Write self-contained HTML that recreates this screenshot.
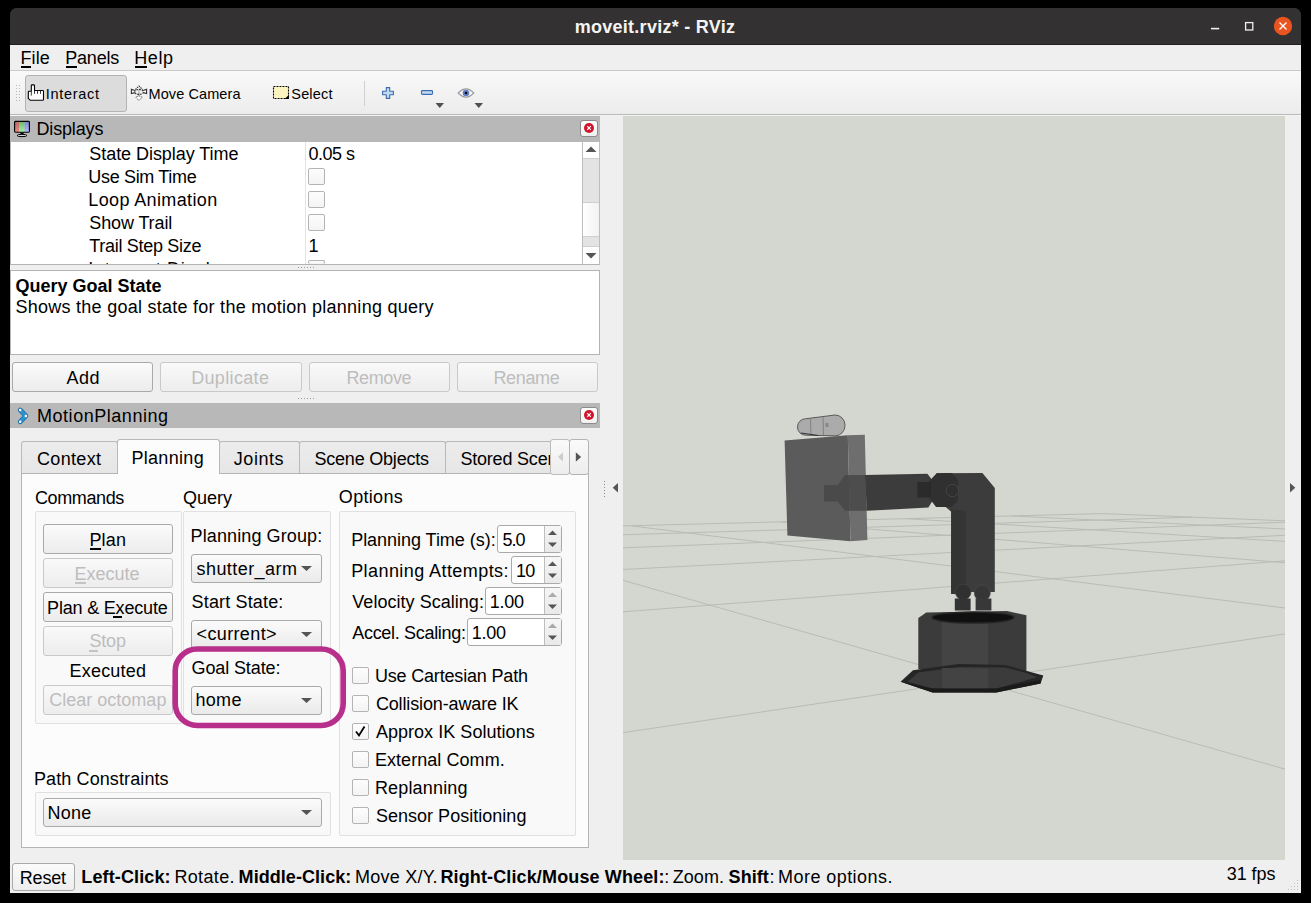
<!DOCTYPE html>
<html><head><meta charset="utf-8">
<style>
html,body{margin:0;padding:0;width:1311px;height:903px;overflow:hidden;background:#000;}
.a{position:absolute;box-sizing:border-box;}
.t{position:absolute;white-space:pre;font-family:"Liberation Sans",sans-serif;line-height:18px;height:18px;}
.btn{position:absolute;box-sizing:border-box;border:1px solid #a9a9a9;border-radius:3px;background:linear-gradient(#fbfbfb,#ececec);}
.btnd{position:absolute;box-sizing:border-box;border:1px solid #c9c9c9;border-radius:3px;background:linear-gradient(#f9f9f9,#ededed);}
.cb{position:absolute;box-sizing:border-box;width:17px;height:17px;border:1px solid #b4b4b4;border-radius:2px;background:linear-gradient(#fdfdfd,#f4f4f4);}
.grp{position:absolute;box-sizing:border-box;border:1px solid #e0e0e0;border-radius:2px;background:#f9f9f9;}
.combo{position:absolute;box-sizing:border-box;border:1px solid #a9a9a9;border-radius:3px;background:linear-gradient(#fbfbfb,#eaeaea);}
.spin{position:absolute;box-sizing:border-box;border:1px solid #a9a9a9;border-radius:3px;background:#fff;}
.tab{position:absolute;box-sizing:border-box;border:1px solid #b9b9b9;border-bottom:none;border-radius:3px 3px 0 0;background:linear-gradient(#ececec,#e6e6e6);}
</style></head>
<body>
<!-- window -->
<div class="a" style="left:10px;top:8px;width:1291px;height:885px;background:linear-gradient(#333132 0,#333132 36px,#efefef 36px);border-radius:7px 7px 0 0;overflow:hidden">
  <div class="a" style="left:0;top:0;width:1291px;height:36px;background:#333132;"></div>
  <div class="a" style="left:0;top:36px;width:1291px;height:1px;background:#1f1f1f;"></div>
</div>
<!-- window controls -->
<svg class="a" style="left:1208px;top:20px" width="14" height="14"><line x1="3" y1="8.6" x2="11.2" y2="8.6" stroke="#f0f0f0" stroke-width="1.6"/></svg>
<svg class="a" style="left:1240px;top:17px" width="18" height="18"><rect x="5.6" y="5.6" width="7.2" height="7.4" fill="none" stroke="#f0f0f0" stroke-width="1.3"/></svg>
<svg class="a" style="left:1272px;top:15px" width="22" height="22"><circle cx="11" cy="11" r="9.2" fill="#e95420"/><path d="M7.5 7.5L14.5 14.5M14.5 7.5L7.5 14.5" stroke="#fff" stroke-width="1.4"/></svg>
<!-- menu underlines -->
<div class="a" style="left:21px;top:66px;width:10px;height:2px;background:#000"></div>
<div class="a" style="left:66px;top:66px;width:11px;height:2px;background:#000"></div>
<div class="a" style="left:135px;top:66px;width:12px;height:2px;background:#000"></div>
<!-- menu bottom border / toolbar -->
<div class="a" style="left:10px;top:70px;width:1291px;height:1px;background:#cbcbcb"></div>
<div class="a" style="left:10px;top:71px;width:1291px;height:43px;background:linear-gradient(#f9f9f9,#ececec)"></div>
<div class="a" style="left:10px;top:114px;width:1291px;height:1px;background:#b9b9b9"></div>
<div class="a" style="left:10px;top:115px;width:1291px;height:1px;background:#f4f4f4"></div>
<!-- toolbar handle dots -->
<svg class="a" style="left:15px;top:84px" width="8" height="20">
  <g fill="#b8b8b8"><rect x="1" y="1" width="1" height="1"/><rect x="4" y="1" width="1" height="1"/><rect x="1" y="4" width="1" height="1"/><rect x="4" y="4" width="1" height="1"/><rect x="1" y="7" width="1" height="1"/><rect x="4" y="7" width="1" height="1"/><rect x="1" y="10" width="1" height="1"/><rect x="4" y="10" width="1" height="1"/><rect x="1" y="13" width="1" height="1"/><rect x="4" y="13" width="1" height="1"/><rect x="1" y="16" width="1" height="1"/><rect x="4" y="16" width="1" height="1"/></g>
</svg>
<!-- Interact pressed button -->
<div class="a" style="left:25px;top:75px;width:102px;height:37px;border:1px solid #b3b3b3;border-radius:3px;background:#dcdcdc"></div>
<!-- hand icon -->
<svg class="a" style="left:26px;top:80px" width="24" height="24" viewBox="0 0 24 24">
  <path d="M5.3 5.7 Q5.3 4.9 6.2 4.9 H7.6 Q8.5 4.9 8.5 5.7 V10.5 H16.7 Q17.5 10.5 17.5 11.3 V19.4 Q17.5 20.3 16.6 20.3 H4.4 L2.3 18.4 V12.1 Q2.3 11.3 3.1 11.3 H5.3 Z" fill="#fff" stroke="#000" stroke-width="1.1" stroke-linejoin="round"/>
  <path d="M5.3 11.3 V15.6 M8.5 10.5 V13.8 M11.5 10.5 V13.8 M14.5 10.5 V13.8" stroke="#222" stroke-width="0.9"/>
</svg>
<!-- move camera icon -->
<svg class="a" style="left:126px;top:80px" width="26" height="26" viewBox="0 0 26 26">
  <line x1="13" y1="9.5" x2="13" y2="17.5" stroke="#bdbdbd" stroke-width="1.6"/>
  <path d="M9.3 9.6 L13 6 L16.7 9.6" fill="none" stroke="#3a3a3a" stroke-width="1.1" stroke-dasharray="1.6 0.8"/>
  <path d="M8.8 10.6 L5.4 9.4 V13.6 L8.8 12.6 M17.2 10.6 L20.6 9.4 V13.6 L17.2 12.6" fill="#fff" stroke="#333" stroke-width="1.1"/>
  <ellipse cx="13" cy="11.9" rx="4.4" ry="2.5" fill="none" stroke="#333" stroke-width="1.1" stroke-dasharray="1.8 0.9"/>
  <path d="M9.7 17.2 L13 20.6 L16.3 17.2 L13 15.8 Z" fill="#fff" stroke="#666" stroke-width="1" stroke-dasharray="1.6 0.8"/>
</svg>
<!-- select icon -->
<svg class="a" style="left:272px;top:85px" width="18" height="16" viewBox="0 0 18 16">
  <rect x="1.5" y="1.5" width="15" height="12" fill="#fbf4c0" stroke="#000" stroke-width="1.1" stroke-dasharray="1.9 1.1"/>
  <path d="M16.9 9.8 V14 H12.7 Z" fill="#000"/>
</svg>
<!-- separator -->
<div class="a" style="left:364px;top:81px;width:1px;height:25px;background:#d0d0d0"></div>
<!-- plus -->
<svg class="a" style="left:381px;top:86px" width="14" height="14" viewBox="0 0 14 14">
  <path d="M5.3 1.6 H8.7 V5.3 H12.4 V8.7 H8.7 V12.4 H5.3 V8.7 H1.6 V5.3 H5.3 Z" fill="#c4daf2" stroke="#3a6cb2" stroke-width="1.1" stroke-linejoin="round"/>
</svg>
<!-- minus -->
<svg class="a" style="left:420px;top:89px" width="14" height="8" viewBox="0 0 14 8">
  <rect x="1.5" y="1.6" width="11" height="3.8" rx="0.8" fill="#c4daf2" stroke="#3a6cb2" stroke-width="1.1"/>
</svg>
<svg class="a" style="left:435px;top:102px" width="10" height="7"><path d="M0.5 1 H9 L4.75 6 Z" fill="#505050"/></svg>
<!-- eye -->
<svg class="a" style="left:457px;top:87px" width="18" height="12" viewBox="0 0 18 12">
  <path d="M1.2 6 Q9 -2.2 16.8 6 Q9 14.2 1.2 6 Z" fill="#f6f6f6" stroke="#9a9a9a" stroke-width="1.1"/>
  <circle cx="9" cy="6" r="3.3" fill="#5f7fc6"/>
  <circle cx="9" cy="6" r="1.3" fill="#000"/>
</svg>
<svg class="a" style="left:474px;top:102px" width="10" height="7"><path d="M0.5 1 H9 L4.75 6 Z" fill="#505050"/></svg>

<!-- Displays header -->
<div class="a" style="left:10px;top:116px;width:590px;height:26px;background:#b8b8b8"></div>
<svg class="a" style="left:10px;top:116px" width="24" height="24" viewBox="0 0 24 24">
  <defs>
   <linearGradient id="gr" x1="0" y1="0" x2="0" y2="1"><stop offset="0" stop-color="#b86666"/><stop offset="1" stop-color="#ec8a8a"/></linearGradient>
   <linearGradient id="gg" x1="0" y1="0" x2="0" y2="1"><stop offset="0" stop-color="#68b868"/><stop offset="1" stop-color="#a6f2a6"/></linearGradient>
   <linearGradient id="gb" x1="0" y1="0" x2="0" y2="1"><stop offset="0" stop-color="#8080d0"/><stop offset="1" stop-color="#b8b8ff"/></linearGradient>
  </defs>
  <rect x="4.6" y="5.4" width="4.6" height="10.8" fill="url(#gr)"/>
  <rect x="9.2" y="5.4" width="5.4" height="10.8" fill="url(#gg)"/>
  <rect x="14.6" y="5.4" width="4.8" height="10.8" fill="url(#gb)"/>
  <rect x="4.6" y="5.4" width="14.8" height="10.8" rx="0.9" fill="none" stroke="#000" stroke-width="1.1"/>
  <path d="M10.7 16.4 H13.3 L13.9 18.4 H10.1 Z" fill="#000"/>
  <ellipse cx="12" cy="19.5" rx="4.9" ry="1.15" fill="#d8d8d8" stroke="#000" stroke-width="1"/>
</svg>
<div class="a" style="left:580px;top:120px;width:18px;height:17px;border:1px solid #8c8c8c;border-radius:3px;background:linear-gradient(#fff,#f0f0f0)"></div>
<svg class="a" style="left:582px;top:121px" width="15" height="15"><circle cx="7" cy="7" r="5" fill="#d0142c"/><path d="M5.2 5.2L8.8 8.8M8.8 5.2L5.2 8.8" stroke="#fff" stroke-width="1.2"/></svg>

<!-- tree -->
<div class="a" style="left:10px;top:142px;width:590px;height:123px;background:#fff;border-bottom:1px solid #b4b4b4;border-left:1px solid #b4b4b4"></div>
<div class="a" style="left:305px;top:142px;width:1px;height:122px;background:#e4e4e4"></div>
<div class="cb" style="left:308px;top:168px"></div>
<div class="cb" style="left:308px;top:191px"></div>
<div class="cb" style="left:308px;top:214px"></div>
<div class="cb" style="left:308px;top:260px;height:4px;border-bottom:none"></div>
<!-- scrollbar -->
<div class="a" style="left:582px;top:142px;width:18px;height:122px;background:#fff;border-left:1px solid #bdbdbd;border-right:1px solid #bdbdbd"></div>
<div class="a" style="left:583px;top:158px;width:16px;height:45px;background:#e3e3e3;border-top:1px solid #cfcfcf;border-bottom:1px solid #cfcfcf"></div>
<div class="a" style="left:583px;top:203px;width:16px;height:33px;background:linear-gradient(90deg,#fff,#f2f2f2)"></div>
<div class="a" style="left:583px;top:236px;width:16px;height:11px;background:#e3e3e3;border-top:1px solid #cfcfcf;border-bottom:1px solid #cfcfcf"></div>
<svg class="a" style="left:584px;top:145px" width="14" height="8"><path d="M1.5 7 H12.5 L7 1.5 Z" fill="#555"/></svg>
<svg class="a" style="left:584px;top:252px" width="14" height="8"><path d="M1.5 1 H12.5 L7 6.5 Z" fill="#555"/></svg>
<!-- splitter dots -->
<svg class="a" style="left:296px;top:265px" width="20" height="5"><g fill="#9a9a9a"><rect x="2" y="2" width="1" height="1"/><rect x="5" y="2" width="1" height="1"/><rect x="8" y="2" width="1" height="1"/><rect x="11" y="2" width="1" height="1"/><rect x="14" y="2" width="1" height="1"/><rect x="17" y="2" width="1" height="1"/></g></svg>

<!-- description box -->
<div class="a" style="left:10px;top:270px;width:590px;height:85px;background:#fff;border:1px solid #b4b4b4"></div>
<!-- buttons row -->
<div class="btn" style="left:12px;top:362px;width:141px;height:30px"></div>
<div class="btnd" style="left:160px;top:362px;width:142px;height:30px"></div>
<div class="btnd" style="left:309px;top:362px;width:141px;height:30px"></div>
<div class="btnd" style="left:457px;top:362px;width:141px;height:30px"></div>
<svg class="a" style="left:296px;top:396px" width="20" height="5"><g fill="#9a9a9a"><rect x="2" y="2" width="1" height="1"/><rect x="5" y="2" width="1" height="1"/><rect x="8" y="2" width="1" height="1"/><rect x="11" y="2" width="1" height="1"/><rect x="14" y="2" width="1" height="1"/><rect x="17" y="2" width="1" height="1"/></g></svg>

<!-- MotionPlanning header -->
<div class="a" style="left:10px;top:403px;width:590px;height:25px;background:#b8b8b8"></div>
<svg class="a" style="left:15px;top:404px" width="16" height="22" viewBox="0 0 16 22">
  <path d="M5.2 6 L10.9 11.9 L5.2 17.7" fill="none" stroke="#1f6fa8" stroke-width="4.8" stroke-linecap="round" stroke-linejoin="round"/>
  <path d="M5.2 6 L10.9 11.9 L5.2 17.7" fill="none" stroke="#2a93d2" stroke-width="3.3" stroke-linecap="round" stroke-linejoin="round"/>
  <circle cx="5.2" cy="6" r="1.25" fill="#fff"/><circle cx="5.2" cy="17.7" r="1.25" fill="#fff"/><circle cx="10.9" cy="11.9" r="1.25" fill="#fff"/>
</svg>
<div class="a" style="left:580px;top:407px;width:18px;height:17px;border:1px solid #8c8c8c;border-radius:3px;background:linear-gradient(#fff,#f0f0f0)"></div>
<svg class="a" style="left:582px;top:408px" width="15" height="15"><circle cx="7" cy="7" r="5" fill="#d0142c"/><path d="M5.2 5.2L8.8 8.8M8.8 5.2L5.2 8.8" stroke="#fff" stroke-width="1.2"/></svg>

<!-- tab pane -->
<div class="a" style="left:21px;top:473px;width:568px;height:375px;background:#fcfcfc;border:1px solid #b4b4b4"></div>
<div class="tab" style="left:21px;top:441px;width:97px;height:32px"></div>
<div class="tab" style="left:219px;top:441px;width:81px;height:32px"></div>
<div class="tab" style="left:299px;top:441px;width:147px;height:32px"></div>
<div class="tab" style="left:445px;top:441px;width:120px;height:32px"></div>
<div class="a" style="left:117px;top:439px;width:103px;height:35px;border:1px solid #b9b9b9;border-bottom:none;border-radius:3px 3px 0 0;background:#fcfcfc"></div>
<!-- tab scroll buttons -->
<div class="a" style="left:550px;top:439px;width:20px;height:36px;border:1px solid #bcbcbc;border-radius:3px;background:linear-gradient(#fafafa,#ededed)"></div>
<div class="a" style="left:569px;top:439px;width:20px;height:36px;border:1px solid #b4b4b4;border-radius:3px;background:linear-gradient(#fafafa,#ededed)"></div>
<svg class="a" style="left:557px;top:452px" width="8" height="11"><path d="M6 0.2 V9.6 L1 4.9 Z" fill="#cdcdcd"/></svg>
<svg class="a" style="left:575px;top:452px" width="8" height="11"><path d="M0.8 0.2 V9.8 L6.1 5 Z" fill="#555"/></svg>

<!-- group boxes -->
<div class="grp" style="left:35px;top:511px;width:147px;height:213px"></div>
<div class="grp" style="left:183px;top:511px;width:148px;height:213px"></div>
<div class="grp" style="left:339px;top:511px;width:237px;height:325px"></div>
<div class="grp" style="left:35px;top:792px;width:296px;height:44px"></div>

<!-- command buttons -->
<div class="btn" style="left:43px;top:524px;width:130px;height:30px"></div>
<div class="btnd" style="left:43px;top:558px;width:130px;height:30px"></div>
<div class="btn" style="left:43px;top:592px;width:130px;height:30px"></div>
<div class="btnd" style="left:43px;top:626px;width:130px;height:30px"></div>
<div class="btnd" style="left:43px;top:685px;width:130px;height:30px"></div>
<div class="a" style="left:90px;top:548px;width:11px;height:2px;background:#000"></div>
<div class="a" style="left:75px;top:582px;width:11px;height:2px;background:#c4c4c4"></div>
<div class="a" style="left:113px;top:616px;width:9px;height:2px;background:#000"></div>
<div class="a" style="left:89px;top:650px;width:9px;height:2px;background:#c4c4c4"></div>

<!-- combos -->
<div class="combo" style="left:191px;top:554px;width:131px;height:29px"></div>
<div class="combo" style="left:191px;top:620px;width:131px;height:29px"></div>
<div class="combo" style="left:191px;top:686px;width:131px;height:29px"></div>
<div class="combo" style="left:43px;top:798px;width:279px;height:29px"></div>
<svg class="a" style="left:300px;top:565px" width="14" height="7"><path d="M1 1 H12 L6.5 6 Z" fill="#555"/></svg>
<svg class="a" style="left:300px;top:631px" width="14" height="7"><path d="M1 1 H12 L6.5 6 Z" fill="#555"/></svg>
<svg class="a" style="left:300px;top:697px" width="14" height="7"><path d="M1 1 H12 L6.5 6 Z" fill="#555"/></svg>
<svg class="a" style="left:300px;top:809px" width="14" height="7"><path d="M1 1 H12 L6.5 6 Z" fill="#555"/></svg>

<!-- spinboxes -->
<div class="spin" style="left:497px;top:525px;width:65px;height:28px"></div>
<div class="spin" style="left:511px;top:556px;width:51px;height:28px"></div>
<div class="spin" style="left:485px;top:587px;width:77px;height:28px"></div>
<div class="spin" style="left:467px;top:618px;width:95px;height:28px"></div>
<div class="a" style="left:544px;top:526px;width:17px;height:26px;border-left:1px solid #bdbdbd;background:linear-gradient(#f6f6f6,#e9e9e9)"></div>
<div class="a" style="left:544px;top:557px;width:17px;height:26px;border-left:1px solid #bdbdbd;background:linear-gradient(#f6f6f6,#e9e9e9)"></div>
<div class="a" style="left:544px;top:588px;width:17px;height:26px;border-left:1px solid #bdbdbd;background:linear-gradient(#f6f6f6,#e9e9e9)"></div>
<div class="a" style="left:544px;top:619px;width:17px;height:26px;border-left:1px solid #bdbdbd;background:linear-gradient(#f6f6f6,#e9e9e9)"></div>
<svg class="a" style="left:544px;top:525px" width="18" height="28"><path d="M4 10 H13 L8.5 5.5 Z M4 17.5 H13 L8.5 22 Z" fill="#555"/></svg>
<svg class="a" style="left:544px;top:556px" width="18" height="28"><path d="M4 10 H13 L8.5 5.5 Z M4 17.5 H13 L8.5 22 Z" fill="#555"/></svg>
<svg class="a" style="left:544px;top:587px" width="18" height="28"><path d="M4 10 H13 L8.5 5.5 Z" fill="#aaa"/><path d="M4 17.5 H13 L8.5 22 Z" fill="#555"/></svg>
<svg class="a" style="left:544px;top:618px" width="18" height="28"><path d="M4 10 H13 L8.5 5.5 Z" fill="#aaa"/><path d="M4 17.5 H13 L8.5 22 Z" fill="#555"/></svg>

<!-- option checkboxes -->
<div class="cb" style="left:352px;top:667px"></div>
<div class="cb" style="left:352px;top:695px"></div>
<div class="cb" style="left:352px;top:723px"></div>
<div class="cb" style="left:352px;top:751px"></div>
<div class="cb" style="left:352px;top:779px"></div>
<div class="cb" style="left:352px;top:807px"></div>
<svg class="a" style="left:352px;top:723px" width="17" height="17"><path d="M4 8.5 L7 12.5 L12.5 3.5" fill="none" stroke="#000" stroke-width="1.8"/></svg>

<!-- magenta highlight -->
<svg class="a" style="left:0;top:0" width="1311" height="903" style="pointer-events:none">
  <rect x="175.2" y="649" width="168" height="76.5" rx="22" ry="22" fill="none" stroke="#b72f8b" stroke-width="5.6"/>
</svg>

<!-- splitter between dock and viewport -->
<svg class="a" style="left:600px;top:478px" width="23" height="22">
  <g fill="#8a8a8a"><rect x="4" y="3" width="1" height="1"/><rect x="4" y="6" width="1" height="1"/><rect x="4" y="9" width="1" height="1"/><rect x="4" y="12" width="1" height="1"/><rect x="4" y="15" width="1" height="1"/><rect x="4" y="18" width="1" height="1"/></g>
  <path d="M18 5 V14.5 L12.7 9.7 Z" fill="#555"/>
</svg>
<svg class="a" style="left:1286px;top:478px" width="15" height="22"><path d="M4 5 V14.5 L9.3 9.7 Z" fill="#555"/></svg>

<!-- viewport -->
<div class="a" style="left:623px;top:116px;width:662px;height:744px;background:#d4d7d0;overflow:hidden">
<svg class="a" style="left:-623px;top:-116px" width="1311" height="903">
<g stroke="#b9bcb6" stroke-width="1" fill="none">
<line x1="103589.9" y1="4773.3" x2="28970.1" y2="1612.8"/>
<line x1="-116372.4" y1="6514.4" x2="-1795.2" y2="588.1"/>
<line x1="105666.1" y1="6325.4" x2="6846.4" y2="740.2"/>
<line x1="-57098.8" y1="4388.5" x2="-995.7" y2="567.5"/>
<line x1="55869.5" y1="5060.1" x2="3985.6" y2="627.4"/>
<line x1="-52415.1" y1="5711.0" x2="-457.7" y2="553.7"/>
<line x1="38538.8" y1="6905.0" x2="2860.1" y2="583.0"/>
<line x1="-19361.5" y1="4046.6" x2="-70.8" y2="543.8"/>
<line x1="-119.2" y1="5396.7" x2="2258.5" y2="559.2"/>
<line x1="-4260.7" y1="5106.1" x2="220.8" y2="536.3"/>
<line x1="-24309.6" y1="4452.8" x2="1884.1" y2="544.5"/>
<line x1="23258.6" y1="7036.9" x2="448.4" y2="530.5"/>
<line x1="-66729.1" y1="5797.0" x2="1628.5" y2="534.4"/>
<line x1="33303.7" y1="4634.2" x2="631.0" y2="525.8"/>
<line x1="-79343.7" y1="4701.1" x2="1443.0" y2="527.1"/>
<line x1="69890.2" y1="6113.2" x2="780.8" y2="521.9"/>
<line x1="-5921.9" y1="801.5" x2="1302.3" y2="521.5"/>
<line x1="63425.4" y1="4255.8" x2="905.8" y2="518.7"/>
<line x1="-2828.6" y1="641.5" x2="1191.8" y2="517.2"/>
<line x1="104465.9" y1="5428.2" x2="1011.8" y2="516.0"/>
<line x1="-1795.2" y1="588.1" x2="1102.7" y2="513.6"/>
<line x1="28970.1" y1="1612.8" x2="1102.7" y2="513.6"/>
</g>

<g>
 <!-- camera -->
 <path d="M805.5 418.8 L835 415 A9.8 10.4 0 0 1 835.5 435.8 L805.5 435.2 A8 8.2 0 0 1 805.5 418.8 Z" fill="#ababab" stroke="#5a5a5a" stroke-width="1"/>
 <path d="M810.5 418.5 L811 435 M823 416.8 L823.5 435.4" stroke="#7c7c7c" stroke-width="0.9"/>
 <rect x="825.5" y="423" width="3" height="4" fill="#888"/>
 <path d="M801 433 L818 435.5" stroke="#333" stroke-width="1.2"/>
 <!-- panel -->
 <polygon points="784.6,440.6 847.8,435.3 850.5,541.3 787.4,535.5" fill="#5b5b5b"/>
 <polygon points="847.8,435.3 864.8,434.8 867.4,540 850.5,541.3" fill="#6e6e6e"/>
 <!-- forearm -->
 <polygon points="864.8,475 927.4,473.8 933,481 933,500 928.4,507.6 867,510.8" fill="#3c3c3c"/>
 <polygon points="824,485.1 837.7,485.1 845,475 865.2,475 867,510.8 845,510.8 837.7,501.6 824,501.6" fill="#484848" fill-opacity="0.85"/>
 <!-- wrist -->
 <polygon points="936.6,473.2 982.4,472.9 994.8,487.9 994.8,592 951.1,592 951.2,511.7 945.7,507 936,507" fill="#3c3c3c"/>
 <polygon points="951.2,509.5 965.6,511 965.6,594 951.1,594" fill="#343434"/>
 <polygon points="929,481.5 936.6,473.2 952,473 958,480 958,500 952,507 936,507 929.3,498" fill="#303030"/>
 <rect x="917.4" y="482" width="13.5" height="15.5" fill="#2b2b2b"/>
 <circle cx="952.4" cy="490.5" r="6.2" fill="#2f2f2f" stroke="#4a4a4a" stroke-width="0.8"/>
 <circle cx="963.2" cy="592" r="7.8" fill="#303030" stroke="#454545" stroke-width="0.7"/>
 <circle cx="982.3" cy="593" r="8" fill="#363636" stroke="#4a4a4a" stroke-width="0.7"/>
 <rect x="954.8" y="598.5" width="15.8" height="12" fill="#333"/>
 <rect x="975.6" y="598.5" width="15.8" height="12" fill="#383838"/>
 <!-- base prism -->
 <polygon points="918.3,618 926.3,612.6 1007,610.9 1026.4,615.3 1026.4,672 918.3,669.3" fill="#3b3b3b"/>
 <polygon points="942,618 988,618 988,671 942,670" fill="#444"/>
 <ellipse cx="973" cy="617.5" rx="41" ry="5.5" fill="#101010" stroke="#262626" stroke-width="1.5"/>
 <!-- base plate -->
 <polygon points="900.6,681.7 913,670.2 959.1,664 1005.2,664.9 1043.3,675.5 1040.6,683.5 996.3,692.4 932.5,692.4" fill="#252525"/>
 <polygon points="907.7,681.7 918.3,672.5 959,667 1005.2,667.5 1026.4,673 1037,677.3 996.3,688.6 932.5,688.6" fill="#3b3b3b"/>
 <polygon points="942,668 988,668.5 988,688.6 942,688.6" fill="#434343"/>
 <polygon points="932.5,688.6 996.3,688.6 1040.6,680 1040.6,683.5 996.3,692.4 932.5,692.4 900.6,681.7" fill="#1a1a1a"/>
</g>
</svg>
</div>

<!-- status bar -->
<div class="btn" style="left:12px;top:863px;width:63px;height:28px;background:linear-gradient(#fbfbfb,#eeeeee)"></div>
<svg class="a" style="left:1285px;top:877px" width="16" height="16"><g fill="#c0c0c0"><rect x="12" y="3" width="1" height="1"/><rect x="9" y="6" width="1" height="1"/><rect x="12" y="6" width="1" height="1"/><rect x="6" y="9" width="1" height="1"/><rect x="9" y="9" width="1" height="1"/><rect x="12" y="9" width="1" height="1"/><rect x="3" y="12" width="1" height="1"/><rect x="6" y="12" width="1" height="1"/><rect x="9" y="12" width="1" height="1"/><rect x="12" y="12" width="1" height="1"/></g></svg>

<div class="t" style="left:574.70px;top:18px;font-size:18px;letter-spacing:0.273px;color:#f4f4f4;font-weight:bold">moveit.rviz* - RViz</div>
<div class="t" style="left:20.40px;top:49px;font-size:18px;letter-spacing:0.136px;color:#000">File</div>
<div class="t" style="left:65.30px;top:49px;font-size:18px;letter-spacing:-0.227px;color:#000">Panels</div>
<div class="t" style="left:134.20px;top:49px;font-size:18px;letter-spacing:0.630px;color:#000">Help</div>
<div class="t" style="left:45.70px;top:85px;font-size:14.5px;letter-spacing:0.696px;color:#000">Interact</div>
<div class="t" style="left:148.50px;top:85px;font-size:14.5px;letter-spacing:0.091px;color:#000">Move Camera</div>
<div class="t" style="left:291.30px;top:85px;font-size:14.5px;letter-spacing:0.166px;color:#000">Select</div>
<div class="t" style="left:36.50px;top:120px;font-size:18px;letter-spacing:-0.160px;color:#000">Displays</div>
<div class="a" style="left:10px;top:142px;width:572px;height:122px;overflow:hidden"><div class="t" style="left:79.30px;top:3px;font-size:18px;letter-spacing:-0.051px;color:#000">State Display Time</div></div>
<div class="a" style="left:10px;top:142px;width:572px;height:122px;overflow:hidden"><div class="t" style="left:78.30px;top:26px;font-size:18px;letter-spacing:-0.330px;color:#000">Use Sim Time</div></div>
<div class="a" style="left:10px;top:142px;width:572px;height:122px;overflow:hidden"><div class="t" style="left:78.30px;top:49px;font-size:18px;letter-spacing:0.371px;color:#000">Loop Animation</div></div>
<div class="a" style="left:10px;top:142px;width:572px;height:122px;overflow:hidden"><div class="t" style="left:79.30px;top:72px;font-size:18px;letter-spacing:-0.118px;color:#000">Show Trail</div></div>
<div class="a" style="left:10px;top:142px;width:572px;height:122px;overflow:hidden"><div class="t" style="left:79.30px;top:95px;font-size:18px;letter-spacing:-0.305px;color:#000">Trail Step Size</div></div>
<div class="a" style="left:10px;top:142px;width:572px;height:122px;overflow:hidden"><div class="t" style="left:78.30px;top:118px;font-size:18px;letter-spacing:0.665px;color:#000">Interrupt Display</div></div>
<div class="t" style="left:308.40px;top:145px;font-size:18px;letter-spacing:-0.507px;color:#000">0.05 s</div>
<div class="t" style="left:308.60px;top:237px;font-size:18px;letter-spacing:0.000px;color:#000">1</div>
<div class="t" style="left:15.60px;top:277px;font-size:18px;letter-spacing:-0.009px;color:#000;font-weight:bold">Query Goal State</div>
<div class="t" style="left:15.50px;top:298px;font-size:18px;letter-spacing:0.260px;color:#000">Shows the goal state for the motion planning query</div>
<div class="t" style="left:66.40px;top:369px;font-size:18px;letter-spacing:0.492px;color:#000">Add</div>
<div class="t" style="left:191.20px;top:369px;font-size:18px;letter-spacing:0.334px;color:#bdbdbd">Duplicate</div>
<div class="t" style="left:346.40px;top:369px;font-size:18px;letter-spacing:-0.363px;color:#bdbdbd">Remove</div>
<div class="t" style="left:493.40px;top:369px;font-size:18px;letter-spacing:-0.325px;color:#bdbdbd">Rename</div>
<div class="t" style="left:37.00px;top:407px;font-size:18px;letter-spacing:0.533px;color:#000">MotionPlanning</div>
<div class="t" style="left:37.00px;top:450px;font-size:18px;letter-spacing:0.328px;color:#000">Context</div>
<div class="t" style="left:131.40px;top:449px;font-size:18px;letter-spacing:0.322px;color:#000">Planning</div>
<div class="t" style="left:233.80px;top:450px;font-size:18px;letter-spacing:0.536px;color:#000">Joints</div>
<div class="t" style="left:314.40px;top:450px;font-size:18px;letter-spacing:-0.197px;color:#000">Scene Objects</div>
<div class="a" style="left:446px;top:430px;width:104px;height:45px;overflow:hidden"><div class="t" style="left:14.40px;top:20px;font-size:18px;letter-spacing:-0.200px;color:#000">Stored Scenes</div></div>
<div class="t" style="left:34.90px;top:489px;font-size:18px;letter-spacing:-0.376px;color:#000">Commands</div>
<div class="t" style="left:183.00px;top:489px;font-size:18px;letter-spacing:-0.029px;color:#000">Query</div>
<div class="t" style="left:338.80px;top:488px;font-size:18px;letter-spacing:0.328px;color:#000">Options</div>
<div class="t" style="left:89.40px;top:531px;font-size:18px;letter-spacing:0.195px;color:#000">Plan</div>
<div class="t" style="left:74.60px;top:565px;font-size:18px;letter-spacing:-0.038px;color:#bdbdbd">Execute</div>
<div class="t" style="left:47.10px;top:599px;font-size:18px;letter-spacing:-0.189px;color:#000">Plan &amp; Execute</div>
<div class="t" style="left:89.40px;top:632px;font-size:18px;letter-spacing:-0.139px;color:#bdbdbd">Stop</div>
<div class="t" style="left:69.60px;top:662px;font-size:18px;letter-spacing:0.180px;color:#000">Executed</div>
<div class="t" style="left:49.20px;top:691px;font-size:18px;letter-spacing:0.013px;color:#bdbdbd">Clear octomap</div>
<div class="t" style="left:190.60px;top:527px;font-size:18px;letter-spacing:0.108px;color:#000">Planning Group:</div>
<div class="t" style="left:196.50px;top:560px;font-size:18px;letter-spacing:0.436px;color:#000">shutter_arm</div>
<div class="t" style="left:191.60px;top:593px;font-size:18px;letter-spacing:0.151px;color:#000">Start State:</div>
<div class="t" style="left:196.50px;top:625px;font-size:18px;letter-spacing:0.371px;color:#000">&lt;current&gt;</div>
<div class="t" style="left:191.60px;top:659px;font-size:18px;letter-spacing:-0.125px;color:#000">Goal State:</div>
<div class="t" style="left:195.50px;top:691px;font-size:18px;letter-spacing:0.295px;color:#000">home</div>
<div class="t" style="left:351.20px;top:531px;font-size:18px;letter-spacing:-0.034px;color:#000">Planning Time (s):</div>
<div class="t" style="left:502.40px;top:531px;font-size:18px;letter-spacing:-0.956px;color:#000">5.0</div>
<div class="t" style="left:351.20px;top:562px;font-size:18px;letter-spacing:0.425px;color:#000">Planning Attempts:</div>
<div class="t" style="left:516.00px;top:562px;font-size:18px;letter-spacing:-0.711px;color:#000">10</div>
<div class="t" style="left:352.30px;top:593px;font-size:18px;letter-spacing:0.033px;color:#000">Velocity Scaling:</div>
<div class="t" style="left:489.70px;top:593px;font-size:18px;letter-spacing:-0.274px;color:#000">1.00</div>
<div class="t" style="left:352.30px;top:624px;font-size:18px;letter-spacing:-0.318px;color:#000">Accel. Scaling:</div>
<div class="t" style="left:471.70px;top:624px;font-size:18px;letter-spacing:-0.241px;color:#000">1.00</div>
<div class="t" style="left:374.90px;top:667px;font-size:18px;letter-spacing:-0.174px;color:#000">Use Cartesian Path</div>
<div class="t" style="left:375.90px;top:695px;font-size:18px;letter-spacing:-0.138px;color:#000">Collision-aware IK</div>
<div class="t" style="left:375.90px;top:723px;font-size:18px;letter-spacing:0.040px;color:#000">Approx IK Solutions</div>
<div class="t" style="left:374.90px;top:751px;font-size:18px;letter-spacing:0.059px;color:#000">External Comm.</div>
<div class="t" style="left:374.90px;top:779px;font-size:18px;letter-spacing:0.171px;color:#000">Replanning</div>
<div class="t" style="left:375.90px;top:807px;font-size:18px;letter-spacing:0.025px;color:#000">Sensor Positioning</div>
<div class="t" style="left:34.00px;top:770px;font-size:18px;letter-spacing:0.102px;color:#000">Path Constraints</div>
<div class="t" style="left:47.50px;top:804px;font-size:18px;letter-spacing:0.260px;color:#000">None</div>
<div class="t" style="left:19.70px;top:869px;font-size:18px;letter-spacing:-0.155px;color:#000">Reset</div>
<div class="t" style="left:81.30px;top:868px;font-size:18px;letter-spacing:0.129px;color:#000;font-weight:bold">Left-Click:</div>
<div class="t" style="left:174.40px;top:868px;font-size:18px;letter-spacing:0.361px;color:#000">Rotate.</div>
<div class="t" style="left:238.60px;top:868px;font-size:18px;letter-spacing:0.057px;color:#000;font-weight:bold">Middle-Click:</div>
<div class="t" style="left:355.00px;top:868px;font-size:18px;letter-spacing:0.236px;color:#000">Move X/Y.</div>
<div class="t" style="left:440.40px;top:868px;font-size:18px;letter-spacing:0.134px;color:#000;font-weight:bold">Right-Click/Mouse Wheel:</div>
<div class="t" style="left:664.30px;top:868px;font-size:18px;letter-spacing:0.000px;color:#000">:</div>
<div class="t" style="left:672.80px;top:868px;font-size:18px;letter-spacing:0.022px;color:#000">Zoom.</div>
<div class="t" style="left:728.60px;top:868px;font-size:18px;letter-spacing:0.051px;color:#000;font-weight:bold">Shift</div>
<div class="t" style="left:769.50px;top:868px;font-size:18px;letter-spacing:0.000px;color:#000">:</div>
<div class="t" style="left:778.10px;top:868px;font-size:18px;letter-spacing:0.437px;color:#000">More options.</div>
<div class="t" style="left:1226.70px;top:865px;font-size:18px;letter-spacing:-0.067px;color:#000">31 fps</div>
</body></html>
